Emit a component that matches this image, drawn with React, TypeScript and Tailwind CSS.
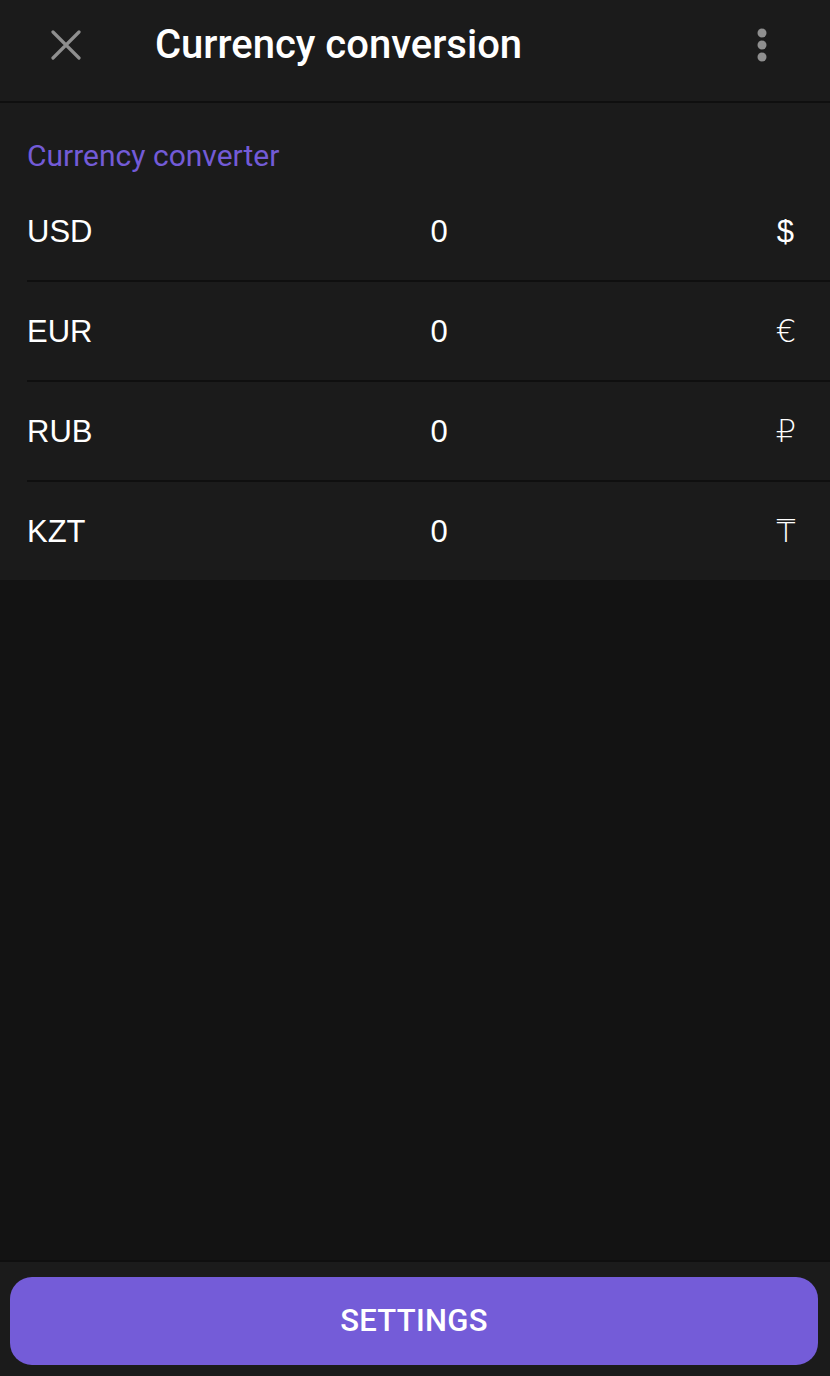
import React from "react";

const rows = [
  { code: "USD", sym: "$", thin: false },
  { code: "EUR", sym: "€", thin: true },
  { code: "RUB", sym: "₽", thin: true },
  { code: "KZT", sym: "₸", thin: true },
];

export default function App() {
  return (
    <div className="w-[830px] h-[1376px] bg-[#131313] flex flex-col overflow-hidden">
      <header className="h-[103px] pb-[11px] bg-[#1b1b1b] flex items-center border-b-2 border-[#0f0f0f] shrink-0">
        <div className="w-[132px] flex justify-center">
          <svg width="30" height="30" viewBox="0 0 30 30">
            <path d="M2 2 L28 28 M28 2 L2 28" stroke="#8f8f8f" strokeWidth="3.2" strokeLinecap="round" />
          </svg>
        </div>
        <div className="ml-[23px] flex-1 text-white text-[40px] font-medium font-['Roboto',sans-serif] leading-none">
          Currency conversion
        </div>
        <div className="w-[136px] flex justify-center">
          <svg width="12" height="36" viewBox="0 0 12 36">
            <circle cx="6" cy="6" r="4.5" fill="#8f8f8f" />
            <circle cx="6" cy="18" r="4.5" fill="#8f8f8f" />
            <circle cx="6" cy="30" r="4.5" fill="#8f8f8f" />
          </svg>
        </div>
      </header>
      <section className="bg-[#1b1b1b] shrink-0">
        <div className="pl-[27px] pt-[38px] text-[#735bd7] text-[30px] font-['Roboto',sans-serif] leading-none">
          Currency converter
        </div>
        <div className="mt-[11px]">
          {rows.map((r, i) => (
            <div
              key={r.code}
              className={`ml-[27px] flex items-center font-['Liberation_Sans',sans-serif] text-white text-[31px] leading-none ${i < rows.length - 1 ? "h-[100px] border-b-2 border-[#0f0f0f]" : "h-[98px]"}`}
            >
              <div className="w-[402px]">{r.code}</div>
              <div className="w-[20px] flex justify-center">0</div>
              <div className="flex-1 flex justify-end pr-[36px]">
                {r.thin ? (
                  <span className="font-['DejaVu_Sans',sans-serif] font-extralight text-[32px] leading-none mr-[-2px]">{r.sym}</span>
                ) : (
                  <span className="font-['Liberation_Sans',sans-serif] text-[31px] leading-none">{r.sym}</span>
                )}
              </div>
            </div>
          ))}
        </div>
      </section>
      <div className="flex-1" />
      <footer className="bg-[#1b1b1b] h-[116px] shrink-0 border-t-2 border-[#0f0f0f] px-[10px] pt-[15px]">
        <button className="w-[808px] h-[88px] rounded-[22px] bg-[#745cd8] text-white text-[31px] font-medium font-['Roboto',sans-serif] tracking-[0.3px]">
          SETTINGS
        </button>
      </footer>
    </div>
  );
}
